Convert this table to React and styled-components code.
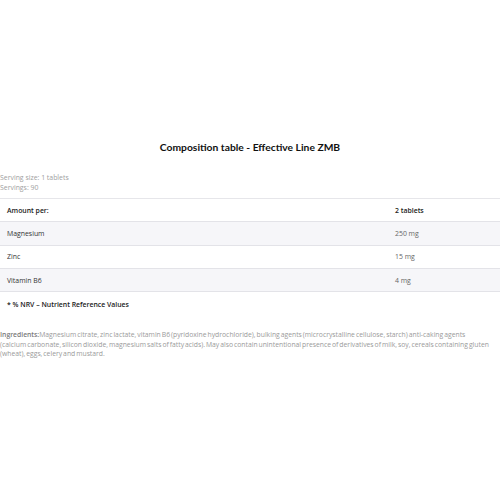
import React from "react";
import styled, { createGlobalStyle } from "styled-components";

const GlobalStyle = createGlobalStyle`
  html, body {
    margin: 0;
    padding: 0;
    background: #fff;
    font-family: "Open Sans", "DejaVu Sans", sans-serif;
  }
`;

const rows = [
  { name: "Magnesium", value: "250 mg" },
  { name: "Zinc", value: "15 mg" },
  { name: "Vitamin B6", value: "4 mg" },
];

const App = () => {
  return (
    <Page>
      <GlobalStyle />
      <Title>Composition table - Effective Line ZMB</Title>
      <Serving>
        <div>Serving size: 1 tablets</div>
        <div>Servings: 90</div>
      </Serving>
      <Table>
        <Row>
          <Cell bold>Amount per:</Cell>
          <Cell bold>2 tablets</Cell>
        </Row>
        {rows.map((r, i) => (
          <Row key={r.name} striped={i % 2 === 0}>
            <Cell>{r.name}</Cell>
            <Cell light>{r.value}</Cell>
          </Row>
        ))}
      </Table>
      <Note>* % NRV – Nutrient Reference Values</Note>
      <Ingredients>
        <Label>Ingredients:</Label>
        <span>
          Magnesium citrate, zinc lactate, vitamin B6 (pyridoxine hydrochloride),
          bulking agents (microcrystalline cellulose, starch) anti-caking agents
          <br />
          (calcium carbonate, silicon dioxide, magnesium salts of fatty acids). May
          also contain unintentional presence of derivatives of milk, soy, cereals
          containing gluten (wheat), eggs, celery and mustard.
        </span>
      </Ingredients>
    </Page>
  );
};

export default App;

// Styling

const Page = styled.div`
  width: 500px;
  height: 500px;
  padding-top: 140px;
  box-sizing: border-box;
  display: flex;
  flex-direction: column;
`;

const Title = styled.h2`
  margin: 0;
  text-align: center;
  font-family: Lato, "Open Sans", sans-serif;
  font-size: 10.3px;
  line-height: 14px;
  font-weight: 700;
  color: #111;
`;

const Serving = styled.div`
  margin-top: 19px;
  font-size: 6.9px;
  line-height: 9.5px;
  color: #a0a0a0;
`;

const Table = styled.div`
  margin-top: 6px;
  border-top: 1px solid #e6e6ea;
`;

const Row = styled.div`
  display: grid;
  grid-template-columns: 388px 1fr;
  height: 22.3px;
  align-items: center;
  border-bottom: 1px solid #e3e3e8;
  background: ${(p) => (p.striped ? "#f6f6f9" : "#fff")};
`;

const Cell = styled.div`
  padding-left: 7px;
  font-size: 6.9px;
  font-weight: ${(p) => (p.bold ? 600 : 400)};
  color: ${(p) => (p.bold ? "#1a1a1a" : p.light ? "#666" : "#333")};
`;

const Note = styled.div`
  margin-top: 8px;
  padding-left: 7px;
  font-size: 6.9px;
  font-weight: 600;
  color: #222;
`;

const Ingredients = styled.p`
  margin: 21px 0 0;
  font-size: 6.8px;
  line-height: 9.5px;
  word-spacing: -0.8px;
  color: #9a9a9a;
`;

const Label = styled.span`
  color: #7a7a7a;
  font-weight: 600;
`;
